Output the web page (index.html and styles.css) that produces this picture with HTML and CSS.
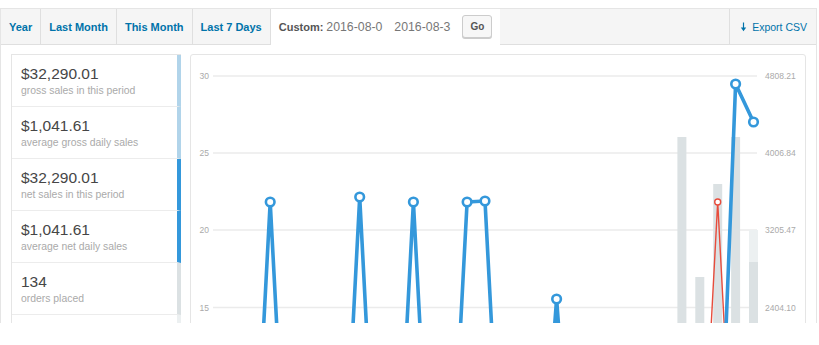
FILE: index.html
```html
<!DOCTYPE html>
<html lang="en">
<head>
  <meta charset="UTF-8">
  <title>Sales by date</title>
  <link rel="stylesheet" href="styles.css">
</head>
<body>
  <div class="frame">
    <div class="report">
      <div class="range-bar">
        <ul class="range-tabs">
          <li><a href="#">Year</a></li>
          <li><a href="#">Last Month</a></li>
          <li><a href="#">This Month</a></li>
          <li><a href="#">Last 7 Days</a></li>
          <li class="custom">
            <span class="custom-label">Custom:</span>
            <input class="range-date" type="text" value="2016-08-01">
            <input class="range-date" type="text" value="2016-08-31">
            <button class="go-btn">Go</button>
          </li>
        </ul>
        <div class="range-fill"></div>
        <a class="export" href="#">
          <svg class="export-icon" width="7" height="10" viewBox="0 0 7 10">
            <line x1="3.5" y1="0.5" x2="3.5" y2="6.5" stroke="#0073aa" stroke-width="1.2"/>
            <path d="M0.8 5.5 L6.2 5.5 L3.5 9.2 Z" fill="#0073aa"/>
          </svg>
          Export CSV
        </a>
      </div>

      <div class="report-body">
        <ul class="chart-legend">
          <li class="legend-gross"><strong>$32,290.01</strong> gross sales in this period</li>
          <li class="legend-gross"><strong>$1,041.61</strong> average gross daily sales</li>
          <li class="legend-net"><strong>$32,290.01</strong> net sales in this period</li>
          <li class="legend-net"><strong>$1,041.61</strong> average net daily sales</li>
          <li class="legend-orders"><strong>134</strong> orders placed</li>
          <li class="legend-items"></li>
        </ul>

        <div class="chart-box">
          <svg class="chart" width="614" height="298" viewBox="191 55 614 298">
            <g class="grid">
              <line x1="213" y1="76" x2="757" y2="76"/>
              <line x1="213" y1="153" x2="757" y2="153"/>
              <line x1="213" y1="230" x2="757" y2="230"/>
              <line x1="213" y1="307.5" x2="757" y2="307.5"/>
            </g>
            <g class="axis-left">
              <text x="209" y="79">30</text>
              <text x="209" y="156">25</text>
              <text x="209" y="233">20</text>
              <text x="209" y="311">15</text>
            </g>
            <g class="axis-right">
              <text x="765" y="79">4808.21</text>
              <text x="765" y="156">4006.84</text>
              <text x="765" y="233">3205.47</text>
              <text x="765" y="311">2404.10</text>
            </g>
            <g class="bars">
              <rect x="677.4" y="137" width="9" height="420"/>
              <rect x="695.3" y="277" width="9" height="280"/>
              <rect x="713.2" y="184" width="9" height="380"/>
              <rect x="731.1" y="137" width="9" height="420"/>
              <rect class="bar-items" x="749" y="230" width="9" height="32"/>
              <rect x="749" y="262" width="9" height="300"/>
            </g>
            <polyline class="line-refund" points="681.9,540 699.8,540 717.7,202 735.6,540 753.5,540"/>
            <circle class="dot-refund" cx="717.7" cy="202" r="3"/>
            <polyline class="line-net" points="216.5,540 252.3,540 270.2,202 288.1,540 341.8,540 359.7,197 377.6,540 395.5,540 413.4,202 431.3,540 449.2,540 467.1,202 485,201 502.9,540 538.7,540 556.6,299 574.5,540 717.7,540 735.6,84 753.5,122"/>
            <g class="dots-net">
              <circle cx="270.2" cy="202" r="4.3"/>
              <circle cx="359.7" cy="197" r="4.3"/>
              <circle cx="413.4" cy="202" r="4.3"/>
              <circle cx="467.1" cy="202" r="4.3"/>
              <circle cx="485" cy="201" r="4.3"/>
              <circle cx="556.6" cy="299" r="4.3"/>
              <circle cx="735.6" cy="84" r="4.3"/>
              <circle cx="753.5" cy="122" r="4.3"/>
            </g>
          </svg>
        </div>
      </div>
    </div>
  </div>
</body>
</html>
```

FILE: styles.css
```css
:root {
  --link: #0073aa;
  --border: #e5e5e5;
  --tab-bg: #f5f5f5;
  --tab-line: #dfdfdf;
  --net: #3498db;
  --gross: #b1d4ea;
  --orders: #dbe1e3;
  --items: #ecf0f1;
  --refund: #e74c3c;
}

* {
  box-sizing: border-box;
}

body {
  margin: 0;
  background: #fff;
  font-family: "Liberation Sans", Arial, sans-serif;
  color: #444;
}

.frame {
  height: 323px;
  overflow: hidden;
  padding-top: 8px;
}

.report {
  width: 817px;
  height: 420px;
  border: 1px solid var(--border);
  background: #fff;
}

/* Range tabs */
.range-bar {
  display: flex;
  height: 36px;
  background: var(--tab-bg);
  border-bottom: 1px solid var(--tab-line);
}

.range-tabs {
  display: flex;
  list-style: none;
  margin: 0;
  padding: 0;
}

.range-tabs li {
  display: flex;
  align-items: center;
  padding: 0 8px;
  border-right: 1px solid var(--tab-line);
}

.range-tabs a {
  color: var(--link);
  font-weight: bold;
  font-size: 11px;
  text-decoration: none;
}

.range-tabs .custom {
  background: #fff;
  height: 36px;
  margin-bottom: -1px;
  border-right: none;
  padding: 0 8px 0 8px;
}

.custom-label {
  font-size: 11px;
  font-weight: bold;
  color: #555;
  margin-right: 3px;
}

.range-date {
  width: 57px;
  border: none;
  padding: 0;
  margin: 0 11px 0 0;
  background: transparent;
  font-family: "Liberation Sans", Arial, sans-serif;
  font-size: 12.3px;
  color: #777;
  outline: none;
}

.go-btn {
  width: 30px;
  height: 23px;
  padding: 0;
  margin-top: -2px;
  font-family: "Liberation Sans", Arial, sans-serif;
  font-size: 10px;
  font-weight: bold;
  color: #555;
  background: #f7f7f7;
  border: 1px solid #ccc;
  border-radius: 3px;
  box-shadow: 0 1px 0 #ccc;
}

.range-fill {
  flex: 1;
}

.export {
  display: flex;
  align-items: center;
  gap: 5px;
  padding: 0 9px 0 10px;
  border-left: 1px solid var(--tab-line);
  color: var(--link);
  font-size: 10.5px;
  text-decoration: none;
}

.export-icon {
  margin-top: 1px;
}

/* Body */
.report-body {
  display: flex;
  gap: 9px;
  padding: 9px 10px 0 10px;
}

.chart-legend {
  width: 170px;
  flex-shrink: 0;
  list-style: none;
  margin: 0;
  padding: 0;
  border-top: 1px solid var(--border);
  border-left: 1px solid var(--border);
}

.chart-legend li {
  height: 52px;
  padding: 9px 9px 0 9px;
  border-bottom: 1px solid #ececec;
  border-right: 4px solid #aaa;
  font-size: 10.4px;
  line-height: 13px;
  color: #aaa;
}

.chart-legend strong {
  display: block;
  font-size: 15.5px;
  line-height: 20px;
  font-weight: normal;
  color: #464646;
}

.legend-gross { border-right-color: var(--gross) !important; }
.legend-net { border-right-color: var(--net) !important; }
.legend-orders { border-right-color: var(--orders) !important; }
.legend-items { border-right-color: var(--items) !important; }

.chart-box {
  flex: 1;
  height: 300px;
  border: 1px solid var(--border);
  border-radius: 3px;
}

.chart {
  display: block;
}

.grid line {
  stroke: #ebebeb;
  stroke-width: 1.4;
}

.axis-left text,
.axis-right text {
  font-family: "Liberation Sans", Arial, sans-serif;
  font-size: 8.5px;
  fill: #aaa;
}

.axis-left text {
  text-anchor: end;
}

.bars rect {
  fill: var(--orders);
}

.bars .bar-items {
  fill: var(--items);
}

.line-net {
  fill: none;
  stroke: var(--net);
  stroke-width: 3.6;
  stroke-linejoin: round;
}

.dots-net circle {
  fill: #fff;
  stroke: var(--net);
  stroke-width: 2.6;
}

.line-refund {
  fill: none;
  stroke: var(--refund);
  stroke-width: 1.4;
}

.dot-refund {
  fill: #fff;
  stroke: var(--refund);
  stroke-width: 1.4;
}
```
